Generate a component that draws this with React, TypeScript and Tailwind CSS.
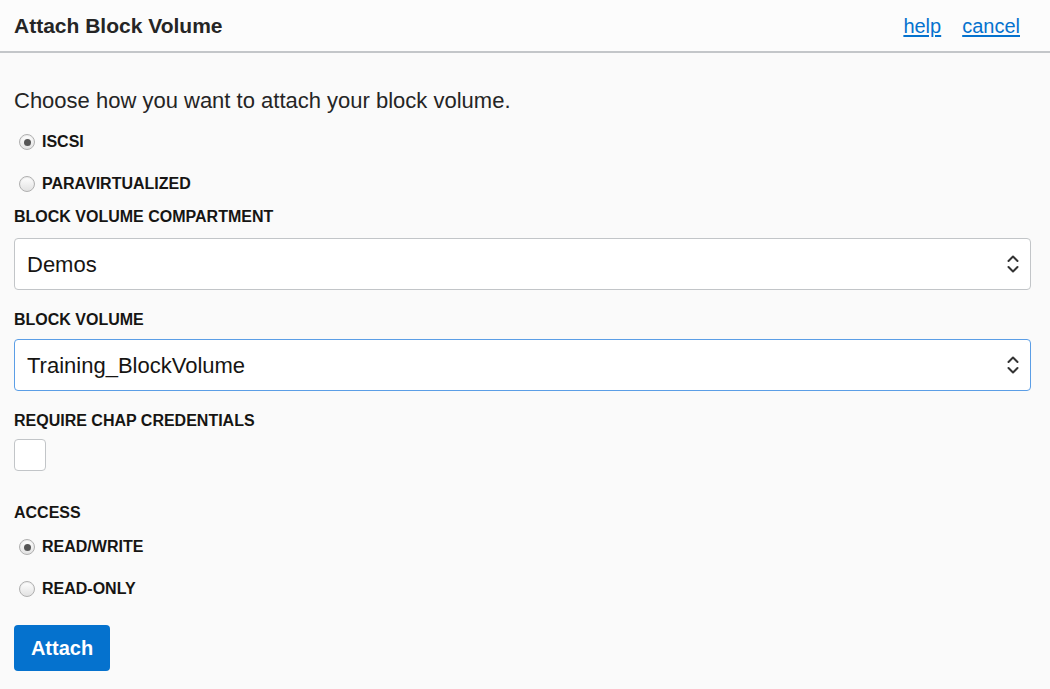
import React from 'react';

const font = { fontFamily: '"Liberation Sans", Arial, sans-serif' };

function Radio({ checked, label }: { checked?: boolean; label: string }) {
  return (
    <label className="flex h-[20px] items-center">
      <span className="ml-[5px] flex h-[16px] w-[16px] items-center justify-center rounded-full border border-[#b0b0b0] bg-gradient-to-b from-[#ffffff] to-[#e2e2e2] shadow-[inset_0_1px_1px_rgba(0,0,0,0.08)]">
        {checked && <span className="h-[7px] w-[7px] rounded-full bg-[#555555]" />}
      </span>
      <span className="ml-[7px] text-[16px] font-bold text-[#161513]">{label}</span>
    </label>
  );
}

function FieldLabel({ children }: { children: React.ReactNode }) {
  return <div className="flex h-[20px] items-center text-[16px] font-bold text-[#161513]">{children}</div>;
}

function Chevrons() {
  return (
    <svg width="14" height="22" viewBox="0 0 14 22" fill="none" stroke="#333" strokeWidth="2" strokeLinecap="round" strokeLinejoin="round">
      <path d="M2.5 8 L7 3.5 L11.5 8" />
      <path d="M2.5 14 L7 18.5 L11.5 14" />
    </svg>
  );
}

function Select({ value, focused }: { value: string; focused?: boolean }) {
  return (
    <div
      className={`flex h-[52px] items-center justify-between rounded-[4px] border bg-white pl-[12px] pr-[10px] text-[22px] text-[#161513] ${
        focused ? 'border-[#5b9ee6]' : 'border-[#c2c5c8]'
      }`}
    >
      <span>{value}</span>
      <Chevrons />
    </div>
  );
}

export default function App() {
  return (
    <div className="h-[689px] w-[1050px] overflow-hidden bg-[#fafafa]" style={font}>
      <header className="flex h-[53px] items-center justify-between border-b-2 border-[#c3c6c9] bg-[#fcfcfc] pl-[14px] pr-[30px]">
        <h1 className="text-[21px] font-bold text-[#252525]">Attach Block Volume</h1>
        <nav className="flex gap-[21px] text-[20px] text-[#0572ce]">
          <a className="underline underline-offset-2">help</a>
          <a className="underline underline-offset-2">cancel</a>
        </nav>
      </header>

      <main className="px-[14px]">
        <p className="mt-[36px] h-[24px] text-[22px] leading-[24px] text-[#252525]">
          Choose how you want to attach your block volume.
        </p>

        <div className="mt-[19px] flex flex-col gap-[22px]">
          <Radio checked label="ISCSI" />
          <Radio label="PARAVIRTUALIZED" />
        </div>

        <div className="mt-[13px]">
          <FieldLabel>BLOCK VOLUME COMPARTMENT</FieldLabel>
          <div className="mt-[11px] mr-[5px]">
            <Select value="Demos" />
          </div>
        </div>

        <div className="mt-[20px]">
          <FieldLabel>BLOCK VOLUME</FieldLabel>
          <div className="mt-[9px] mr-[5px]">
            <Select value="Training_BlockVolume" focused />
          </div>
        </div>

        <div className="mt-[20px]">
          <FieldLabel>REQUIRE CHAP CREDENTIALS</FieldLabel>
          <div className="mt-[8px] h-[32px] w-[32px] rounded-[4px] border border-[#c2c5c8] bg-white" />
        </div>

        <div className="mt-[32px]">
          <FieldLabel>ACCESS</FieldLabel>
          <div className="mt-[14px] flex flex-col gap-[22px]">
            <Radio checked label="READ/WRITE" />
            <Radio label="READ-ONLY" />
          </div>
        </div>

        <button className="mt-[26px] flex h-[46px] w-[96px] items-center justify-center rounded-[4px] bg-[#0572ce] text-[20px] font-bold text-white">
          Attach
        </button>
      </main>
    </div>
  );
}
